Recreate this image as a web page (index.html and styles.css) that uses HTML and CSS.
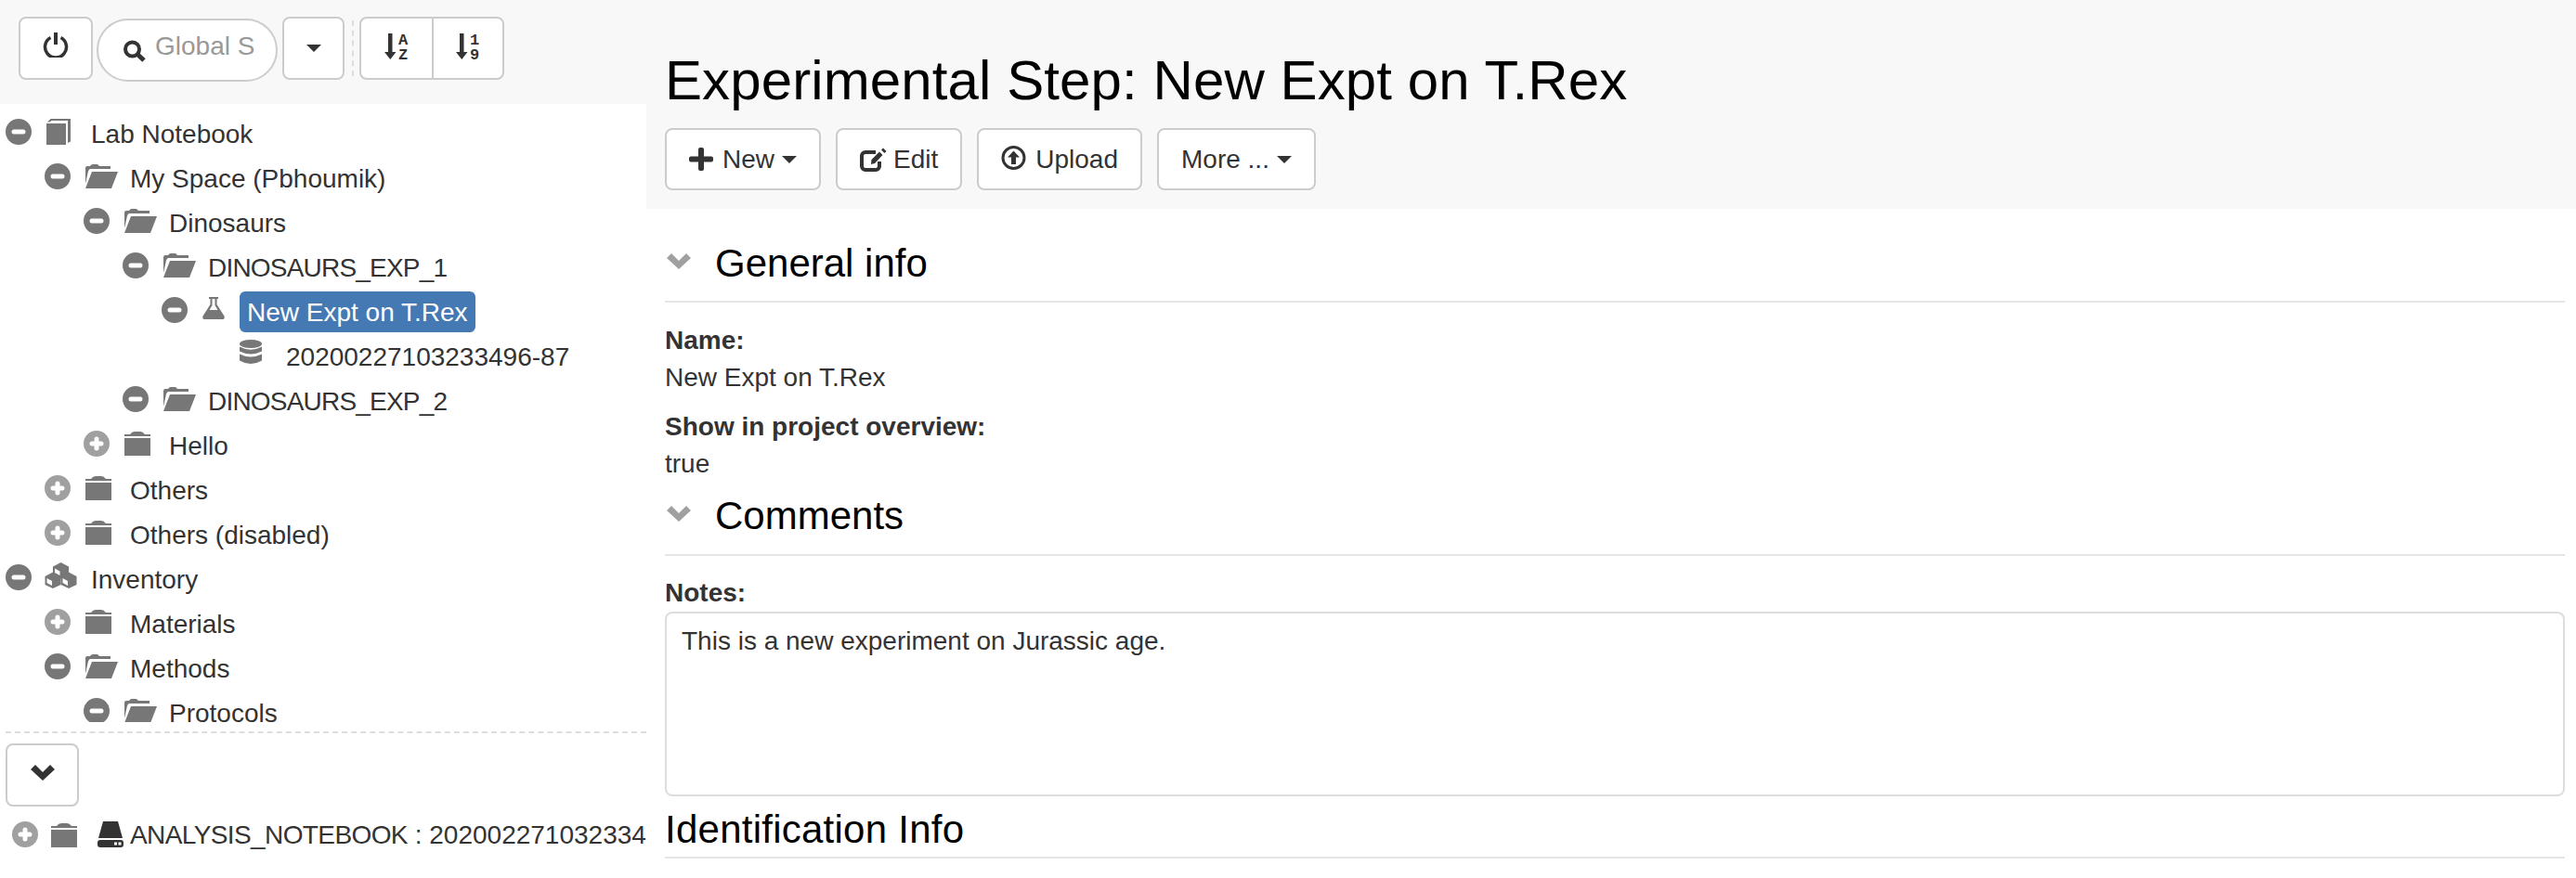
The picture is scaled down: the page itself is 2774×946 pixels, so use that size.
FILE: index.html
```html
<!DOCTYPE html>
<html lang="en">
<head>
    <meta charset="UTF-8">
    <title>Experimental Step: New Expt on T.Rex</title>
    <link rel="stylesheet" href="styles.css">
</head>
<body>
    <svg class="sprite" xmlns="http://www.w3.org/2000/svg">
        <symbol id="i-minus" viewBox="0 0 28 28"><path fill-rule="evenodd" d="M14 0a14 14 0 1 0 0 28a14 14 0 1 0 0-28ZM9 11.500h10a2.500 2.500 0 0 1 0 5H9a2.500 2.500 0 0 1 0-5Z"/></symbol>
        <symbol id="i-plus" viewBox="0 0 28 28"><path fill-rule="evenodd" d="M14 0a14 14 0 1 0 0 28a14 14 0 1 0 0-28ZM11.500 9a2.500 2.500 0 0 1 5 0v2.500H19a2.500 2.500 0 0 1 0 5h-2.500V19a2.500 2.500 0 0 1-5 0v-2.500H9a2.500 2.500 0 0 1 0-5h2.500Z"/></symbol>
        <symbol id="i-book" viewBox="0 0 26 28"><path d="M0 5H21V28H0Z"/><path d="M1 3.500L4.500 0H26V24.500L23 26V2H5.500L3.500 3.500Z"/></symbol>
        <symbol id="i-folder-open" viewBox="0 0 35 26"><path d="M0 21V4Q0 2 2 2H5Q6 0 8 0H12Q14 0 15 2H27V5H5Q4 5 3 7.500Z"/><path d="M7 8H35L28 26H0Z"/></symbol>
        <symbol id="i-folder" viewBox="0 0 28 26"><path d="M0 3H6Q8 0 11 0H17Q20 0 22 3H28V5H0Z"/><path d="M0 7H28V26H0Z"/></symbol>
        <symbol id="i-flask" viewBox="0 0 24 24"><path fill-rule="evenodd" d="M7 0H17V2H15.500V8L23.500 20.500Q24.500 24 22 24H2Q-.5 24 .5 20.500L8.500 8V2H7ZM10.500 2V9L7.500 14H16.500L13.500 9V2Z"/></symbol>
        <symbol id="i-db" viewBox="0 0 24 27"><ellipse cx="12" cy="4.500" rx="12" ry="4.500"/><path d="M0 7.500Q12 14 24 7.500V12.500Q12 18.500 0 12.500Z"/><path d="M0 15.500Q12 21.500 24 15.500V22.500Q12 29.500 0 22.500Z"/></symbol>
        <symbol id="i-cubes" viewBox="0 0 35 28">
            <path d="M17.500 0L26 4.500V13L17.500 17.500L9 13V4.500Z"/>
            <path d="M9 10.500L17.500 15V24L9 28L.5 24V15Z"/>
            <path d="M26 10.500L34.500 15V24L26 28L17.500 24V15Z"/>
            <path fill="#fff" d="M11 6.500L16.500 9.500V14L11 11ZM2.500 17L8 20V25L2.500 22ZM19.500 17L25 20V25L19.500 22Z"/>
        </symbol>
        <symbol id="i-drive" viewBox="0 0 28 28"><path d="M6 0H22L27 18H1Z"/><path fill-rule="evenodd" d="M3 20H25a3 3 0 0 1 3 3V25a3 3 0 0 1-3 3H3a3 3 0 0 1-3-3V23a3 3 0 0 1 3-3ZM18 22.500v3h3v-3ZM22.500 22.500v3h3v-3Z"/></symbol>
        <symbol id="i-chevron" viewBox="0 0 26 17"><path d="M0 5L5 0L13 8L21 0L26 5L13 17Z"/></symbol>
        <symbol id="i-caret" viewBox="0 0 16 8"><path d="M0 0H16L8 8Z"/></symbol>
        <symbol id="i-power" viewBox="0 0 28 27"><path fill="none" stroke="currentColor" stroke-width="3.500" d="M8.500 5.500a11.500 11.500 0 1 0 11 0"/><path d="M12 0h4v13h-4Z"/></symbol>
        <symbol id="i-search" viewBox="0 0 26 24"><circle cx="10.500" cy="10" r="7.500" fill="none" stroke="currentColor" stroke-width="4"/><path fill="none" stroke="currentColor" stroke-width="5" d="M16 15.500L23 22"/></symbol>
        <symbol id="i-new" viewBox="0 0 26 25"><path d="M10 2a2 2 0 0 1 2-2h2a2 2 0 0 1 2 2v7.500h8a2 2 0 0 1 2 2v2a2 2 0 0 1-2 2h-8V23a2 2 0 0 1-2 2h-2a2 2 0 0 1-2-2v-7.500H2a2 2 0 0 1-2-2v-2a2 2 0 0 1 2-2h8Z"/></symbol>
        <symbol id="i-edit" viewBox="0 0 29 26"><path fill="none" stroke="currentColor" stroke-width="4" d="M17 5H6a4 4 0 0 0-4 4V20a4 4 0 0 0 4 4H17a4 4 0 0 0 4-4V15"/><path d="M12 18L12.500 13L21 4.500L24.500 8L16 17ZM23 2.500L25 .5L28.500 4L26.500 6Z"/></symbol>
        <symbol id="i-upload" viewBox="0 0 27 26"><circle cx="13.500" cy="13" r="11.500" fill="none" stroke="currentColor" stroke-width="3"/><path d="M13.500 5.500L20 12.500H16V20H11V12.500H7Z"/></symbol>
    </svg>

    <div class="page">
        <aside class="side">
            <div class="toolbar">
                <button class="btn btn-power"><svg class="ico-power"><use href="#i-power"/></svg></button>
                <label class="search">
                    <svg class="ico-search"><use href="#i-search"/></svg>
                    <input class="search-input" type="text" placeholder="Global S">
                </label>
                <button class="btn btn-drop"><svg class="ico-caret"><use href="#i-caret"/></svg></button>
                <span class="tool-sep"></span>
                <div class="btn-group">
                    <button class="btn btn-sort">
                        <svg class="ico-sort" viewBox="0 0 26 28">
                            <path d="M4 0h4.500v20H12.500L6.250 28L0 20H4Z"/>
                            <text class="sort-letter" x="20" y="12">A</text>
                            <text class="sort-letter" x="20" y="28">Z</text>
                        </svg>
                    </button>
                    <button class="btn btn-sort">
                        <svg class="ico-sort" viewBox="0 0 26 28">
                            <path d="M4 0h4.500v20H12.500L6.250 28L0 20H4Z"/>
                            <text class="sort-letter" x="20" y="12">1</text>
                            <text class="sort-letter" x="20" y="28">9</text>
                        </svg>
                    </button>
                </div>
            </div>

            <div class="tree">
                <div class="node lvl-0"><svg class="tog tog-minus"><use href="#i-minus"/></svg><span class="type"><svg class="ico-book"><use href="#i-book"/></svg></span><span class="label">Lab Notebook</span></div>
                <div class="node lvl-1"><svg class="tog tog-minus"><use href="#i-minus"/></svg><span class="type"><svg class="ico-open"><use href="#i-folder-open"/></svg></span><span class="label">My Space (Pbhoumik)</span></div>
                <div class="node lvl-2"><svg class="tog tog-minus"><use href="#i-minus"/></svg><span class="type"><svg class="ico-open"><use href="#i-folder-open"/></svg></span><span class="label">Dinosaurs</span></div>
                <div class="node lvl-3"><svg class="tog tog-minus"><use href="#i-minus"/></svg><span class="type"><svg class="ico-open"><use href="#i-folder-open"/></svg></span><span class="label label-caps">DINOSAURS_EXP_1</span></div>
                <div class="node lvl-4"><svg class="tog tog-minus"><use href="#i-minus"/></svg><span class="type"><svg class="ico-flask"><use href="#i-flask"/></svg></span><span class="label selected">New Expt on T.Rex</span></div>
                <div class="node lvl-5"><span class="tog"></span><span class="type"><svg class="ico-db"><use href="#i-db"/></svg></span><span class="label">20200227103233496-87</span></div>
                <div class="node lvl-3"><svg class="tog tog-minus"><use href="#i-minus"/></svg><span class="type"><svg class="ico-open"><use href="#i-folder-open"/></svg></span><span class="label label-caps">DINOSAURS_EXP_2</span></div>
                <div class="node lvl-2"><svg class="tog tog-plus"><use href="#i-plus"/></svg><span class="type"><svg class="ico-folder"><use href="#i-folder"/></svg></span><span class="label">Hello</span></div>
                <div class="node lvl-1"><svg class="tog tog-plus"><use href="#i-plus"/></svg><span class="type"><svg class="ico-folder"><use href="#i-folder"/></svg></span><span class="label">Others</span></div>
                <div class="node lvl-1"><svg class="tog tog-plus"><use href="#i-plus"/></svg><span class="type"><svg class="ico-folder"><use href="#i-folder"/></svg></span><span class="label">Others (disabled)</span></div>
                <div class="node lvl-0"><svg class="tog tog-minus"><use href="#i-minus"/></svg><span class="type"><svg class="ico-cubes"><use href="#i-cubes"/></svg></span><span class="label">Inventory</span></div>
                <div class="node lvl-1"><svg class="tog tog-plus"><use href="#i-plus"/></svg><span class="type"><svg class="ico-folder"><use href="#i-folder"/></svg></span><span class="label">Materials</span></div>
                <div class="node lvl-1"><svg class="tog tog-minus"><use href="#i-minus"/></svg><span class="type"><svg class="ico-open"><use href="#i-folder-open"/></svg></span><span class="label">Methods</span></div>
                <div class="node lvl-2"><svg class="tog tog-minus"><use href="#i-minus"/></svg><span class="type"><svg class="ico-open"><use href="#i-folder-open"/></svg></span><span class="label">Protocols</span></div>
            </div>

            <div class="side-foot">
                <button class="btn btn-more"><svg class="ico-chevron"><use href="#i-chevron"/></svg></button>
                <div class="history">
                    <svg class="tog tog-plus"><use href="#i-plus"/></svg>
                    <svg class="ico-folder history-folder"><use href="#i-folder"/></svg>
                    <svg class="ico-drive"><use href="#i-drive"/></svg>
                    <span class="history-text"><span class="caps">ANALYSIS_NOTEBOOK</span> : 202002271032334</span>
                </div>
            </div>
        </aside>

        <main class="main">
            <header class="head">
                <h1 class="title">Experimental Step: New Expt on T.Rex</h1>
                <div class="actions">
                    <button class="btn btn-act"><svg class="ico-new"><use href="#i-new"/></svg>New<svg class="ico-caret"><use href="#i-caret"/></svg></button>
                    <button class="btn btn-act"><svg class="ico-edit"><use href="#i-edit"/></svg>Edit</button>
                    <button class="btn btn-act"><svg class="ico-upload"><use href="#i-upload"/></svg>Upload</button>
                    <button class="btn btn-act">More ...<svg class="ico-caret"><use href="#i-caret"/></svg></button>
                </div>
            </header>

            <div class="content">
                <h3 class="sec sec-first"><svg class="sec-chevron"><use href="#i-chevron"/></svg>General info</h3>
                <div class="field">
                    <div class="field-label">Name:</div>
                    <div class="field-value">New Expt on T.Rex</div>
                </div>
                <div class="field">
                    <div class="field-label">Show in project overview:</div>
                    <div class="field-value">true</div>
                </div>

                <h3 class="sec"><svg class="sec-chevron"><use href="#i-chevron"/></svg>Comments</h3>
                <div class="field">
                    <div class="field-label">Notes:</div>
                    <div class="notes">This is a new experiment on Jurassic age.</div>
                </div>

                <h3 class="sec sec-plain">Identification Info</h3>
            </div>
        </main>
    </div>
</body>
</html>
```

FILE: styles.css
```css
* {
    box-sizing: border-box;
}
html, body {
    margin: 0;
    height: 100%;
    overflow: hidden;
}
body {
    font-family: "Liberation Sans", Arial, sans-serif;
    font-size: 28px;
    line-height: 40px;
    color: #333;
    background-color: #fff;
}
.sprite {
    display: none;
}
.page {
    display: flex;
    height: 946px;
}

/* left panel */
.side {
    width: 696px;
    flex: none;
}
.toolbar {
    display: flex;
    align-items: flex-start;
    height: 112px;
    padding: 18px 0 0 20px;
    background-color: #f8f8f8;
}
.btn {
    display: inline-flex;
    align-items: center;
    justify-content: center;
    height: 68px;
    padding: 0;
    font: inherit;
    color: #333;
    fill: #333;
    background-color: #fff;
    border: 2px solid #ccc;
    border-radius: 8px;
}
.btn-power {
    width: 80px;
}
.ico-power {
    width: 28px;
    height: 27px;
    margin-top: -8px;
}
.search {
    display: flex;
    align-items: center;
    width: 195px;
    height: 68px;
    margin: 2px 5px 0 4px;
    padding-left: 26px;
    background-color: #fff;
    border: 2px solid #ccc;
    border-radius: 34px;
    color: #333;
}
.ico-search {
    width: 26px;
    height: 24px;
    flex: none;
    margin-top: 2px;
}
.search-input {
    width: 120px;
    margin-left: 9px;
    margin-top: -8px;
    padding: 0;
    border: none;
    outline: none;
    background: none;
    font: inherit;
}
.search-input::placeholder {
    color: #999;
    opacity: 1;
}
.btn-drop {
    width: 67px;
}
.ico-caret {
    width: 16px;
    height: 8px;
    fill: #333;
}
.tool-sep {
    width: 0;
    height: 60px;
    margin: 4px 6px 0 8px;
    border-left: 2px dashed #ddd;
}
.btn-group {
    display: flex;
}
.btn-sort {
    width: 78px;
}
.btn-sort:first-child {
    border-radius: 8px 0 0 8px;
    border-right: none;
}
.btn-sort:last-child {
    border-radius: 0 8px 8px 0;
}
.ico-sort {
    width: 26px;
    height: 28px;
    margin-top: -4px;
    overflow: visible;
}
.sort-letter {
    font-family: "Liberation Mono", monospace;
    font-size: 17px;
    font-weight: bold;
    text-anchor: middle;
}

/* tree */
.tree {
    height: 666px;
    padding-top: 8px;
    overflow: hidden;
}
.node {
    display: flex;
    align-items: center;
    height: 48px;
    white-space: nowrap;
}
.lvl-0 { padding-left: 6px; }
.lvl-1 { padding-left: 48px; }
.lvl-2 { padding-left: 90px; }
.lvl-3 { padding-left: 132px; }
.lvl-4 { padding-left: 174px; }
.lvl-5 { padding-left: 216px; }
.tog {
    display: block;
    width: 28px;
    height: 28px;
    flex: none;
    margin-top: -4px;
}
.tog-minus {
    fill: #777;
}
.tog-plus {
    fill: #a0a0a0;
}
.type {
    display: flex;
    align-items: center;
    width: 40px;
    height: 28px;
    margin-left: 16px;
    margin-top: -4px;
    flex: none;
    fill: #777;
}
.lvl-5 .type {
    margin-left: 14px;
    width: 42px;
}
.ico-book { width: 26px; height: 28px; }
.ico-open { width: 35px; height: 26px; flex: none; }
.ico-folder { width: 28px; height: 26px; flex: none; fill: #777; }
.ico-flask { width: 24px; height: 24px; margin-top: -4px; }
.ico-db { width: 24px; height: 27px; margin-top: -5px; }
.ico-cubes { width: 35px; height: 28px; flex: none; margin: -5px 0 0 -2px; }
.label {
    padding: 0 8px;
    height: 44px;
    line-height: 46px;
    border-radius: 6px;
}
.label-caps {
    letter-spacing: -0.8px;
}
.caps {
    letter-spacing: -0.6px;
}
.selected {
    color: #fff;
    background-color: #4479b3;
}
.side-foot {
    margin: 10px 0 0 6px;
    padding-top: 11px;
    border-top: 2px dashed #ddd;
}
.btn-more {
    width: 79px;
}
.ico-chevron {
    width: 26px;
    height: 17px;
    margin-top: -6px;
}
.history {
    display: flex;
    align-items: center;
    height: 48px;
    margin-top: 7px;
    padding-left: 7px;
    overflow: hidden;
    white-space: nowrap;
}
.history .tog {
    margin-top: -2px;
}
.history-folder {
    margin: 0 0 0 14px;
}
.ico-drive {
    width: 28px;
    height: 28px;
    flex: none;
    margin: -2px 7px 0 22px;
    fill: #333;
}

/* right panel */
.main {
    flex: 1;
    min-width: 0;
}
.head {
    height: 225px;
    padding: 54px 12px 0 20px;
    background-color: #f8f8f8;
}
.title {
    margin: 0 0 18px;
    font-size: 60px;
    font-weight: normal;
    line-height: 66px;
    letter-spacing: 0.1px;
    color: #000;
}
.actions {
    display: flex;
    gap: 16px;
}
.btn-act {
    padding: 0 24px;
    height: 67px;
}
.btn-act .ico-caret {
    margin-left: 8px;
}
.ico-new {
    width: 26px;
    height: 25px;
    margin-right: 10px;
}
.ico-edit {
    width: 29px;
    height: 26px;
    margin-right: 7px;
}
.ico-upload {
    width: 27px;
    height: 26px;
    margin: -3px 10px 0 0;
}
.content {
    padding: 0 12px 0 20px;
}
.sec {
    display: flex;
    align-items: center;
    margin: 13px 0 20px;
    padding-bottom: 18px;
    font-size: 42px;
    font-weight: normal;
    line-height: 46px;
    color: #000;
    border-bottom: 2px solid #e5e5e5;
}
.sec-first {
    margin-top: 36px;
    padding-bottom: 17px;
    margin-bottom: 21px;
}
.sec-chevron {
    width: 26px;
    height: 17px;
    margin: -5px 26px 0 2px;
    fill: #a0a0a0;
}
.sec-plain {
    margin-top: 13px;
    padding-bottom: 6px;
    letter-spacing: 0.25px;
}
.field + .field {
    margin-top: 13px;
}
.field-label {
    font-weight: bold;
}
.notes {
    height: 199px;
    padding: 10px 16px;
    background-color: #fff;
    border: 2px solid #ddd;
    border-radius: 8px;
}
```
